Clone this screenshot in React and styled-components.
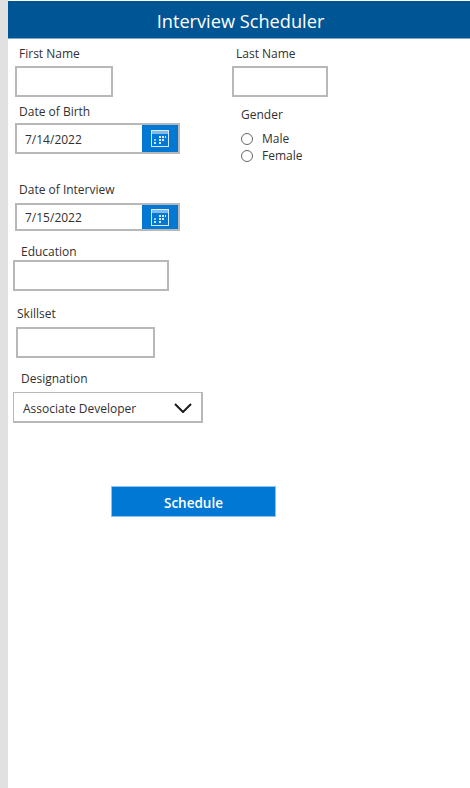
import styled, { createGlobalStyle } from 'styled-components'

const GlobalStyle = createGlobalStyle`
  html, body {
    margin: 0;
    padding: 0;
    background: #fff;
  }
  body {
    font-family: "Open Sans", "Noto Sans", "Liberation Sans", sans-serif;
  }
`

function CalendarIcon() {
  return (
    <svg width="18" height="17" viewBox="0 0 18 17" fill="none">
      <rect x="0.5" y="0.5" width="17" height="16" stroke="#d8eafa" />
      <rect x="1" y="1" width="16" height="3" fill="#7fbbe8" />
      <g fill="#d8eafa">
        <rect x="8" y="6" width="2" height="2" />
        <rect x="11" y="6" width="2" height="2" />
        <rect x="14" y="6" width="1" height="2" />
        <rect x="3" y="9" width="2" height="2" opacity="0.7" />
        <rect x="8" y="9" width="2" height="2" />
        <rect x="11" y="9" width="2" height="2" />
        <rect x="3" y="12" width="2" height="2" />
        <rect x="8" y="12" width="2" height="2" />
      </g>
    </svg>
  )
}

function Chevron() {
  return (
    <svg width="18" height="10" viewBox="0 0 18 10" fill="none">
      <path d="M1 1l8 8 8-8" stroke="#1b1b1b" strokeWidth="2" />
    </svg>
  )
}

function DateField({ value, height, line }) {
  return (
    <DateBox $h={height}>
      <DateValue $line={line}>{value}</DateValue>
      <CalendarButton>
        <CalendarIcon />
      </CalendarButton>
    </DateBox>
  )
}

export default function App() {
  return (
    <Page>
      <GlobalStyle />
      <Rail />
      <Main>
        <Header>Interview Scheduler</Header>
        <TopGrid>
          <div>
            <Label $left={11} $top={6}>First Name</Label>
            <TextBox $left={7} $top={4} $w={98} />
            <Label $left={11} $top={6}>Date of Birth</Label>
            <DateWrap $left={7} $top={3}>
              <DateField value="7/14/2022" height={31} line={29} />
            </DateWrap>
          </div>
          <div>
            <Label $left={4} $top={6}>Last Name</Label>
            <TextBox $left={0} $top={4} $w={96} />
            <Label $left={9} $top={9}>Gender</Label>
            <RadioGroup>
              <RadioRow><RadioDot />Male</RadioRow>
              <RadioRow><RadioDot />Female</RadioRow>
            </RadioGroup>
          </div>
        </TopGrid>
        <Label $left={11} $top={17}>Date of Interview</Label>
        <DateWrap $left={7} $top={5}>
          <DateField value="7/15/2022" height={28} line={25} />
        </DateWrap>
        <Label $left={13} $top={12}>Education</Label>
        <TextBox $left={5} $top={0} $w={156} />
        <Label $left={9} $top={14}>Skillset</Label>
        <TextBox $left={8} $top={5} $w={139} />
        <Label $left={13} $top={12}>Designation</Label>
        <SelectBox>
          Associate Developer
          <Chevron />
        </SelectBox>
        <ScheduleButton>Schedule</ScheduleButton>
      </Main>
    </Page>
  )
}

const Page = styled.div`
  display: flex;
  width: 470px;
  height: 788px;
  overflow: hidden;
  background: #fff;
`
const Rail = styled.div`
  width: 8px;
  flex: none;
  background: #e1e1e1;
`
const Main = styled.div`
  flex: 1;
  min-width: 0;
`
const Header = styled.div`
  height: 37px;
  margin-top: 1px;
  padding-left: 3px;
  border-bottom: 1px solid #7fa9ca;
  background: #005595;
  color: #fff;
  font-size: 18.2px;
  line-height: 40px;
  text-align: center;
`
const TopGrid = styled.div`
  display: grid;
  grid-template-columns: 224px 1fr;
`
const Label = styled.div`
  margin: ${(p) => p.$top}px 0 0 ${(p) => p.$left}px;
  height: 17px;
  font-size: 12px;
  line-height: 17px;
  color: #323130;
`
const TextBox = styled.div`
  box-sizing: border-box;
  width: ${(p) => p.$w}px;
  height: 31px;
  margin: ${(p) => p.$top}px 0 0 ${(p) => p.$left}px;
  border: 2px solid #b8b8b8;
  background: #fff;
`
const DateWrap = styled.div`
  margin: ${(p) => p.$top}px 0 0 ${(p) => p.$left}px;
`
const DateBox = styled.div`
  box-sizing: border-box;
  display: flex;
  align-items: stretch;
  width: 165px;
  height: ${(p) => p.$h}px;
  border: 2px solid #b8b8b8;
  background: #fff;
`
const DateValue = styled.div`
  flex: 1;
  padding-left: 8px;
  font-size: 12px;
  line-height: ${(p) => p.$line}px;
  color: #323130;
`
const CalendarButton = styled.div`
  display: flex;
  align-items: center;
  justify-content: center;
  width: 36px;
  background: #0078d4;
`
const RadioGroup = styled.div`
  display: flex;
  flex-direction: column;
  margin: 7px 0 0 9px;
`
const RadioRow = styled.div`
  display: flex;
  align-items: center;
  gap: 9px;
  height: 17px;
  font-size: 12px;
  color: #323130;
`
const RadioDot = styled.span`
  box-sizing: border-box;
  width: 12px;
  height: 12px;
  border: 1px solid #666;
  border-radius: 50%;
`
const SelectBox = styled.div`
  box-sizing: border-box;
  display: flex;
  align-items: center;
  justify-content: space-between;
  width: 190px;
  height: 31px;
  margin: 5px 0 0 5px;
  padding: 2px 9px 0 9px;
  border: 1px solid #b8b8b8;
  border-width: 1px 2px 2px 1px;
  font-size: 12px;
  color: #323130;
`
const ScheduleButton = styled.div`
  box-sizing: border-box;
  width: 165px;
  height: 31px;
  margin: 63px 0 0 103px;
  border: 1px solid #8fc3ea;
  background: #0078d4;
  color: #fff;
  font-size: 13.5px;
  font-weight: 600;
  line-height: 33px;
  text-align: center;
`
